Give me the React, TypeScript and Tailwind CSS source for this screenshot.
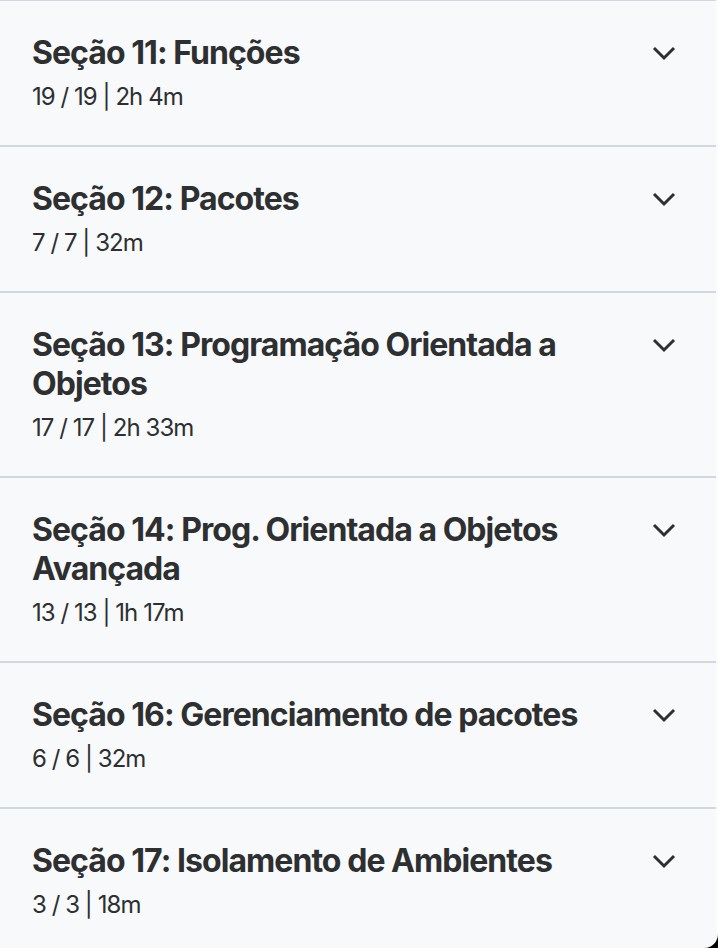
import * as React from 'react';

type Section = { title: string; progress: string };

const sections: Section[] = [
  { title: 'Seção 11: Funções', progress: '19 / 19 | 2h 4m' },
  { title: 'Seção 12: Pacotes', progress: '7 / 7 | 32m' },
  { title: 'Seção 13: Programação Orientada a Objetos', progress: '17 / 17 | 2h 33m' },
  { title: 'Seção 14: Prog. Orientada a Objetos Avançada', progress: '13 / 13 | 1h 17m' },
  { title: 'Seção 16: Gerenciamento de pacotes', progress: '6 / 6 | 32m' },
  { title: 'Seção 17: Isolamento de Ambientes', progress: '3 / 3 | 18m' },
];

function Chevron() {
  return (
    <svg width="40" height="39" viewBox="0 0 24 23.4" fill="none" stroke="#2d2f31" strokeWidth={1.8} className="shrink-0">
      <path d="M6 9l6 6 6-6" strokeLinejoin="miter" strokeLinecap="butt" />
    </svg>
  );
}

function SectionRow(props: { section: Section }) {
  return (
    <div className="flex items-start gap-6 border-b-2 border-[#d1d7dc] px-8 py-8">
      <div className="flex-1 min-w-0">
        <h3 className="text-[32px] font-bold leading-[39px] tracking-[-0.95px] text-[#2d2f31]">
          {props.section.title}
        </h3>
        <div className="mt-2 text-[24px] leading-[33px] tracking-[-0.95px] text-[#2d2f31]">
          {props.section.progress}
        </div>
      </div>
      <Chevron />
    </div>
  );
}

export default function App() {
  return (
    <div className="h-[948px] w-[718px] overflow-hidden bg-black" style={{ fontFamily: 'Inter, "Noto Sans", sans-serif' }}>
      <div className="h-full w-full overflow-hidden rounded-br-[14px] border-r-2 border-r-[#fbfcfc] bg-[#f7f9fa]">
        <div className="border-t border-[#d1d7dc]">
          {sections.map((s) => (
            <SectionRow key={s.title} section={s} />
          ))}
        </div>
      </div>
    </div>
  );
}
